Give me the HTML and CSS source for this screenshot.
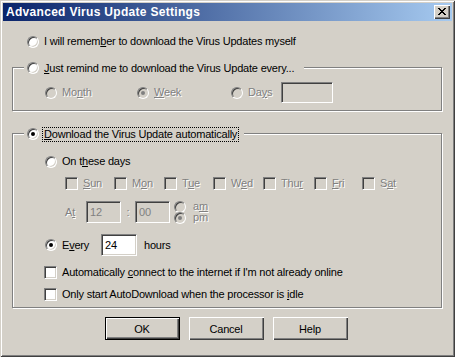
FILE: index.html
```html
<!DOCTYPE html>
<html lang="en">
<head>
  <meta charset="UTF-8" />
  <title>Advanced Virus Update Settings</title>
  <link rel="stylesheet" href="styles.css">
</head>
<body>
  <div class="window">
    <div class="titlebar">
      <span class="title">Advanced Virus Update Settings</span>
      <span class="close">
        <svg width="8" height="7" viewBox="0 0 8 7">
          <path d="M0 0h2v1h-2zM6 0h2v1h-2zM1 1h2v1h-2zM5 1h2v1h-2zM2 2h4v1h-4zM3 3h2v1h-2zM2 4h4v1h-4zM1 5h2v1h-2zM5 5h2v1h-2zM0 6h2v1h-2zM6 6h2v1h-2z" fill="#000"/>
        </svg>
      </span>
    </div>

    <div class="content">
      <div class="row top-option">
        <span class="radio"></span>
        <span class="label">I will remem<u>b</u>er to download the Virus Updates myself</span>
      </div>

      <!-- reminder group -->
      <div class="group group-remind">
        <div class="legend">
          <span class="radio"></span>
          <span class="label"><u>J</u>ust remind me to download the Virus Update every...</span>
        </div>
        <div class="row period-row disabled">
          <div class="opt opt-month"><span class="radio"></span><span class="label">Mo<u>n</u>th</span></div>
          <div class="opt opt-week"><span class="radio checked"></span><span class="label"><u>W</u>eek</span></div>
          <div class="opt opt-days"><span class="radio"></span><span class="label">Da<u>y</u>s</span></div>
          <span class="textbox days-box"></span>
        </div>
      </div>

      <!-- automatic group -->
      <div class="group group-auto">
        <div class="legend">
          <span class="radio checked"></span>
          <span class="label focused"><u>D</u>ownload the Virus Update automatically</span>
        </div>

        <div class="row days-option">
          <span class="radio"></span>
          <span class="label">On t<u>h</u>ese days</span>
        </div>

        <div class="weekdays disabled">
          <div class="opt"><span class="checkbox"></span><span class="label"><u>S</u>un</span></div>
          <div class="opt"><span class="checkbox"></span><span class="label">M<u>o</u>n</span></div>
          <div class="opt"><span class="checkbox"></span><span class="label">T<u>u</u>e</span></div>
          <div class="opt"><span class="checkbox"></span><span class="label">W<u>e</u>d</span></div>
          <div class="opt"><span class="checkbox"></span><span class="label">Thu<u>r</u></span></div>
          <div class="opt"><span class="checkbox"></span><span class="label"><u>F</u>ri</span></div>
          <div class="opt"><span class="checkbox"></span><span class="label">S<u>a</u>t</span></div>
        </div>

        <div class="row time-row disabled">
          <span class="label at-label">A<u>t</u></span>
          <span class="textbox time-box">12</span>
          <span class="label colon">:</span>
          <span class="textbox time-box">00</span>
          <div class="ampm">
            <div class="opt"><span class="radio"></span><span class="label">a<u>m</u></span></div>
            <div class="opt"><span class="radio checked"></span><span class="label">pm</span></div>
          </div>
        </div>

        <div class="row every-row">
          <span class="radio checked"></span>
          <span class="label every-label">E<u>v</u>ery</span>
          <span class="textbox hours-box">24</span>
          <span class="label">hours</span>
        </div>

        <div class="row check-row connect-row">
          <span class="checkbox"></span>
          <span class="label">Automatically <u>c</u>onnect to the internet if I'm not already online</span>
        </div>

        <div class="row check-row idle-row">
          <span class="checkbox"></span>
          <span class="label">Only start AutoDownload when the processor is <u>i</u>dle</span>
        </div>
      </div>

      <div class="buttons">
        <button class="button default">OK</button>
        <button class="button">Cancel</button>
        <button class="button">Help</button>
      </div>
    </div>
  </div>
</body>
</html>
```

FILE: styles.css
```css
body {
  margin: 0;
  padding: 0;
  background-color: #d4d0c8;
  font-family: 'Liberation Sans', Arial, sans-serif;
  font-size: 11px;
  letter-spacing: -0.2px;
  color: #000;
}

u {
  text-underline-offset: 1px;
}

.window {
  width: 455px;
  height: 357px;
  box-sizing: border-box;
  padding: 3px;
  background-color: #d4d0c8;
  box-shadow: inset 1px 1px 0 #d4d0c8, inset -1px -1px 0 #404040, inset 2px 2px 0 #fff, inset -2px -2px 0 #808080;
}

.titlebar {
  height: 18px;
  display: flex;
  align-items: center;
  justify-content: space-between;
  padding: 0 2px 0 3px;
  background: linear-gradient(to right, #0a246a, #a6caf0);
}

.title {
  color: #fff;
  font-weight: 700;
  font-size: 12px;
  letter-spacing: 0.3px;
}

.close {
  width: 16px;
  height: 14px;
  box-sizing: border-box;
  display: flex;
  align-items: center;
  justify-content: center;
  background: #d4d0c8;
  box-shadow: inset 1px 1px 0 #fff, inset -1px -1px 0 #404040, inset -2px -2px 0 #808080;
}

.close svg {
  display: block;
  margin: 0 1px 1px 0;
}

.content {
  padding: 0 10px 0 9px;
}

.row {
  display: flex;
  align-items: center;
  height: 13px;
}

.label {
  line-height: 13px;
  white-space: nowrap;
}

/* controls */
.radio {
  width: 12px;
  height: 12px;
  box-sizing: border-box;
  flex: none;
  position: relative;
  border-radius: 50%;
  border: 1px solid;
  border-color: #808080 #fff #fff #808080;
  box-shadow: inset 1px 1px 0 #404040, inset -1px -1px 0 #d4d0c8;
  background: #fff;
  margin-right: 5px;
}

.radio.checked::after {
  content: '';
  position: absolute;
  left: 3px;
  top: 3px;
  width: 4px;
  height: 4px;
  border-radius: 50%;
  background: #000;
}

.checkbox {
  width: 13px;
  height: 13px;
  box-sizing: border-box;
  flex: none;
  border: 1px solid;
  border-color: #808080 #fff #fff #808080;
  box-shadow: inset 1px 1px 0 #404040, inset -1px -1px 0 #d4d0c8;
  background: #fff;
  margin-right: 5px;
}

.textbox {
  height: 22px;
  box-sizing: border-box;
  display: flex;
  align-items: center;
  padding: 0 3px;
  border: 1px solid;
  border-color: #808080 #fff #fff #808080;
  box-shadow: inset 1px 1px 0 #404040, inset -1px -1px 0 #d4d0c8;
  background: #fff;
}

.disabled .label {
  color: #808080;
  text-shadow: 1px 1px 0 #fff;
}

.disabled .radio,
.disabled .checkbox,
.disabled .textbox {
  background: #d4d0c8;
}

.disabled .radio.checked::after {
  background: #808080;
}

.disabled .textbox {
  color: #808080;
}

.opt {
  display: flex;
  align-items: center;
}

/* group boxes */
.group {
  border: 1px solid #808080;
  box-shadow: inset 1px 1px 0 #fff, 1px 1px 0 #fff;
}

.legend {
  display: flex;
  align-items: center;
  width: max-content;
  height: 14px;
  margin: -7px 0 0 11px;
  padding: 0 5px 0 3px;
  background: #d4d0c8;
}

.group-remind .legend {
  padding-right: 10px;
}

.top-option {
  margin-top: 14px;
  padding-left: 15px;
}

.group-remind {
  margin-top: 19px;
  padding-bottom: 7px;
}

.period-row {
  height: 21px;
  margin-top: 7px;
  padding-left: 32px;
}

.opt-month {
  width: 92px;
}

.opt-week {
  width: 94px;
}

.opt-days {
  width: 50px;
}

.days-box {
  width: 52px;
  height: 21px;
}

.group-auto {
  margin-top: 22px;
  padding-bottom: 6px;
}

.focused {
  border: 1px dotted #000;
  padding: 0 1px;
  margin-left: -2px;
}

.days-option {
  margin-top: 14px;
  padding-left: 32px;
}

.weekdays {
  display: grid;
  grid-template-columns: 49px 50px 49px 50px 51px 48px auto;
  margin-top: 9px;
  padding-left: 52px;
  height: 13px;
}

.time-row {
  height: 22px;
  margin-top: 11px;
  padding-left: 52px;
}

.at-label {
  width: 21px;
}

.time-box {
  width: 35px;
}

.colon {
  width: 14px;
  text-align: center;
}

.ampm {
  display: flex;
  flex-direction: column;
  margin-left: 4px;
}

.ampm .opt {
  height: 11px;
}

.ampm .radio {
  margin-right: 7px;
}

.every-row {
  height: 22px;
  margin-top: 11px;
  padding-left: 32px;
}

.every-label {
  width: 39px;
}

.hours-box {
  width: 36px;
  margin-right: 7px;
}

.check-row {
  padding-left: 31px;
}

.connect-row {
  margin-top: 10px;
}

.idle-row {
  margin-top: 9px;
}

/* dialog buttons */
.buttons {
  display: flex;
  justify-content: center;
  gap: 9px;
  margin-top: 9px;
  padding-right: 2px;
}

.button {
  width: 75px;
  height: 23px;
  padding: 0;
  border: none;
  background: #d4d0c8;
  font-family: inherit;
  font-size: 11px;
  letter-spacing: -0.2px;
  color: #000;
  box-shadow: inset 1px 1px 0 #fff, inset -1px -1px 0 #404040, inset -2px -2px 0 #808080;
}

.button.default {
  box-shadow: inset 0 0 0 1px #000, inset 2px 2px 0 #fff, inset -2px -2px 0 #404040, inset -3px -3px 0 #808080;
}
```
